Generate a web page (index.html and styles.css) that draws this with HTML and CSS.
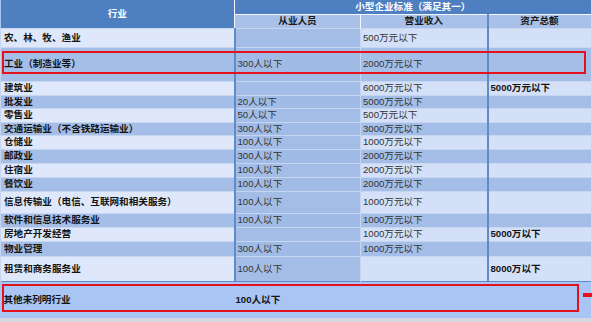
FILE: index.html
```html
<!DOCTYPE html>
<html lang="zh">
<head>
<meta charset="utf-8">
<link rel="stylesheet" href="styles.css">
</head>
<body>
<div class="sheet">
<table class="std">
<colgroup><col class="c1"><col class="c2"><col class="c3"><col class="c4"></colgroup>
<thead>
<tr class="h1"><th rowspan="2" class="hind">行业</th><th colspan="3" class="htop">小型企业标准（满足其一）</th></tr>
<tr class="h2"><th class="sub">从业人员</th><th class="sub">营业收入</th><th class="sub">资产总额</th></tr>
</thead>
<tbody>
<tr class="lt r19"><td class="ind">农、林、牧、渔业</td><td class="emp"></td><td>500万元以下</td><td></td></tr>
<tr class="dk r34"><td class="ind">工业（制造业等）</td><td class="emp">300人以下</td><td>2000万元以下</td><td></td></tr>
<tr class="lt r14"><td class="ind">建筑业</td><td class="emp"></td><td>6000万元以下</td><td class="b">5000万元以下</td></tr>
<tr class="dk r13"><td class="ind">批发业</td><td class="emp">20人以下</td><td>5000万元以下</td><td></td></tr>
<tr class="lt r14"><td class="ind">零售业</td><td class="emp">50人以下</td><td>500万元以下</td><td></td></tr>
<tr class="dk r13"><td class="ind">交通运输业（不含铁路运输业）</td><td class="emp">300人以下</td><td>3000万元以下</td><td></td></tr>
<tr class="lt r14"><td class="ind">仓储业</td><td class="emp">100人以下</td><td>1000万元以下</td><td></td></tr>
<tr class="dk r14"><td class="ind">邮政业</td><td class="emp">300人以下</td><td>2000万元以下</td><td></td></tr>
<tr class="lt r14"><td class="ind">住宿业</td><td class="emp">100人以下</td><td>2000万元以下</td><td></td></tr>
<tr class="dk r14"><td class="ind">餐饮业</td><td class="emp">100人以下</td><td>2000万元以下</td><td></td></tr>
<tr class="lt r22"><td class="ind">信息传输业（电信、互联网和相关服务）</td><td class="emp">100人以下</td><td>1000万元以下</td><td></td></tr>
<tr class="dk r14"><td class="ind">软件和信息技术服务业</td><td class="emp">100人以下</td><td>1000万元以下</td><td></td></tr>
<tr class="lt r14"><td class="ind">房地产开发经营</td><td class="emp"></td><td>1000万元以下</td><td class="b">5000万以下</td></tr>
<tr class="dk r15"><td class="ind">物业管理</td><td class="emp">300人以下</td><td>1000万元以下</td><td></td></tr>
<tr class="lt r25"><td class="ind">租赁和商务服务业</td><td class="emp">100人以下</td><td></td><td class="b">8000万以下</td></tr>
<tr class="last"><td class="ind">其他未列明行业</td><td colspan="3" class="b lastval">100人以下</td></tr>
</tbody>
</table>
<div class="mark mark-ind"></div>
<div class="mark mark-other"></div>
<div class="tick"></div>
</div>
</body>
</html>
```

FILE: styles.css
```css
html, body {
  margin: 0;
  padding: 0;
}
body {
  width: 592px;
  height: 322px;
  background: #d4d8de;
  overflow: hidden;
  font-family: "Liberation Sans", "Noto Sans CJK SC", sans-serif;
  font-size: 9.6px;
  color: #1c1c1c;
}
.sheet {
  position: relative;
  width: 590px;
  height: 318px;
  background: #a9c5f2;
}
.std {
  width: 590px;
  border-collapse: collapse;
  table-layout: fixed;
  line-height: 1;
}
.c1 { width: 234px; }
.c2 { width: 126px; }
.c3 { width: 127px; }
.c4 { width: 103px; }

th, td {
  padding: 0 0 0 2px;
  white-space: nowrap;
  overflow: hidden;
  text-align: left;
  vertical-align: middle;
  border-top: 1px solid #c6d6f1;
  border-left: 1px solid #c6d6f1;
}
.h1 { height: 14px; }
.h2 { height: 14px; }
.htop, .hind {
  background: #4d7fc1;
  color: #ffffff;
  font-weight: 700;
  text-align: center;
  border: none;
  padding: 0;
  font-family: "Noto Sans CJK SC", sans-serif;
}
.hind { border-right: 1px solid #f2f6fd; }
.sub {
  background: #a9c1e8;
  color: #1a1a1a;
  font-weight: 700;
  text-align: center;
  padding: 0;
  border-top: 1px solid #f4f7fd;
  border-left: 1px solid #f4f7fd;
  font-family: "Noto Sans CJK SC", sans-serif;
}
.sub + .sub { border-left: 1px solid #f4f7fd; }
.sub:last-child { border-left: 2px solid #5f8bc9; }

.ind {
  font-weight: 700;
  font-family: "Noto Sans CJK SC", sans-serif;
  padding-left: 3px;
}
td { color: #333; }
td.ind { color: #141414; }
td.b { font-weight: 700; color: #141414; }
td:nth-child(2) { border-left: 2px solid #5f8bc9; }
td:nth-child(4) { border-left: 2px solid #5f8bc9; }

.lt td { background: #d3e0f7; }
.lt td.ind { background: #dee8fa; }
.dk td { background: #a4bee8; }
td.emp { background: #a0bbe6; }
.lt td.emp { background: #a3bde7; }

.r13 { height: 13px; }
.r14 { height: 14px; }
.r15 { height: 15px; }
.r19 { height: 19px; }
.r22 { height: 22px; }
.r25 { height: 25px; }
.r34 { height: 34px; }

.last { height: 37px; }
.last td {
  background: #a9c5f3;
  border-top: 1px solid #5f8bc9;
  border-left: none;
}
.last td.lastval { padding-left: 1px; }

.mark {
  position: absolute;
  border: 2px solid #e3121c;
  box-sizing: border-box;
}
.mark-ind { left: 2px; top: 51px; width: 584px; height: 23px; }
.mark-other { left: 2px; top: 284px; width: 577px; height: 28px; }
.tick {
  position: absolute;
  left: 583px;
  top: 293px;
  width: 9px;
  height: 4px;
  background: #e3121c;
}
```
